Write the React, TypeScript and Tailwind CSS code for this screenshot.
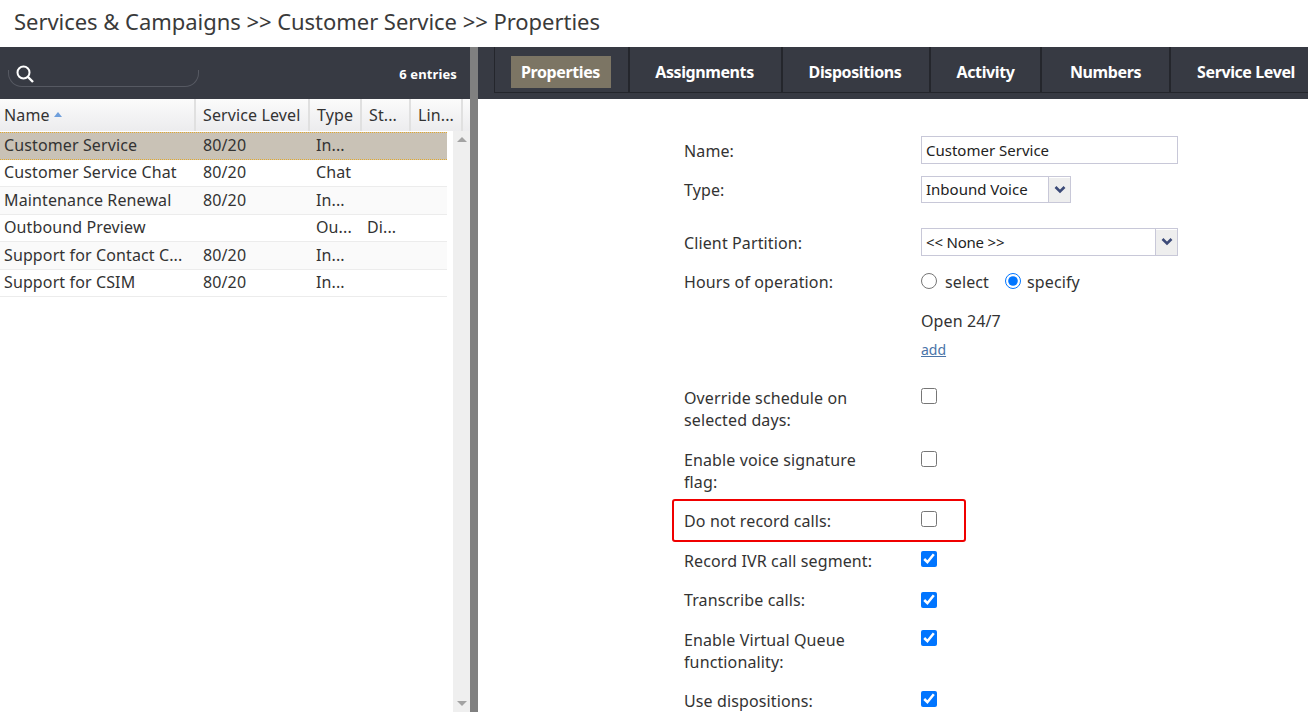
import { ReactNode } from "react";

const tabs = [
	{ label: "Properties", cls: "w-[135px] pr-[2px]" },
	{ label: "Assignments", cls: "w-[153px] pr-[2px]" },
	{ label: "Dispositions", cls: "w-[148px] pr-[2px]" },
	{ label: "Activity", cls: "w-[111px]" },
	{ label: "Numbers", cls: "w-[129px]" },
	{ label: "Service Level", cls: "w-[152px]" },
];

const cols = [
	{ label: "Name", cls: "w-[196px] pl-1" },
	{ label: "Service Level", cls: "w-[114px] pl-[7px]" },
	{ label: "Type", cls: "w-[52px] pl-[7px]" },
	{ label: "St...", cls: "w-[49px] pl-[7px]" },
	{ label: "Lin...", cls: "w-[52px] pl-[7px]" },
];

const cellWidths = ["w-[195px] pl-1", "w-[113px] pl-2", "w-[51px] pl-2", "w-[49px] pl-2", "w-[39px] pl-2"];

const rows = [
	["Customer Service", "80/20", "In...", "", ""],
	["Customer Service Chat", "80/20", "Chat", "", ""],
	["Maintenance Renewal", "80/20", "In...", "", ""],
	["Outbound Preview", "", "Ou...", "Di...", ""],
	["Support for Contact C...", "80/20", "In...", "", ""],
	["Support for CSIM", "80/20", "In...", "", ""],
];

function Row({ label, className, children }: { label?: ReactNode; className: string; children?: ReactNode }) {
	return (
		<div className={`flex ${className}`}>
			<div className="w-[237px] pr-[45px] leading-[22px]">{label}</div>
			<div className="flex-1">{children}</div>
		</div>
	);
}

function Check({ checked }: { checked?: boolean }) {
	return <input type="checkbox" defaultChecked={checked} className="block w-4 h-4 m-0" />;
}

function Arrow() {
	return (
		<span className="w-[22px] h-full shrink-0 flex items-center justify-center bg-[#eeeeee] border-l border-[#c8c8d8] shadow-[inset_0_1px_0_#fff]">
			<svg width="12" height="8" viewBox="0 0 12 8">
				<path d="M1.5 1 L6 5.5 L10.5 1" fill="none" stroke="#3c4a78" strokeWidth="2.6" />
			</svg>
		</span>
	);
}

export default function App() {
	return (
		<div className="h-[712px] w-[1308px] overflow-hidden bg-white text-[#333] text-[16px] tracking-[0.12px] font-['Noto_Sans',sans-serif]">
			<h1 className="h-[47px] pl-[14px] pt-[5px] text-[22px] leading-[33px] tracking-[-0.04px] text-[#3a3a3a]">
				Services &amp; Campaigns &gt;&gt; Customer Service &gt;&gt; Properties
			</h1>
			<div className="flex h-[665px]">
				<section className="w-[470px] flex flex-col">
					<div className="h-[52px] bg-[#373a43] flex items-start justify-between pl-2 pr-[13px]">
						<div className="w-[191px] h-[17px] mt-[23px] border-b border-l border-r border-[#565962] rounded-b-[14px] pl-[6px]">
							<svg width="20" height="20" viewBox="0 0 20 20" className="-mt-[6px]">
								<circle cx="8.5" cy="8.5" r="6" fill="none" stroke="#fff" strokeWidth="2" />
								<path d="M13 13 L18 18" stroke="#fff" strokeWidth="2.4" />
							</svg>
						</div>
						<span className="mt-[17px] text-[13px] leading-[20px] font-bold text-white">6 entries</span>
					</div>
					<div className="h-[32px] flex bg-gradient-to-b from-[#fbfbfb] to-[#ececee]">
						{cols.map((c, i) => (
							<div key={c.label} className={`${c.cls} shrink-0 leading-[32px] border-r-2 border-[#e0e0e0] flex items-center gap-1`}>
								{c.label}
								{i === 0 && <span className="w-0 h-0 mb-px border-x-[4.5px] border-x-transparent border-b-[5px] border-b-[#6f9fdc]" />}
							</div>
						))}
					</div>
					<div className="flex flex-1">
						<div className="w-[447px] pt-px">
							{rows.map((r, i) => (
								<div
									key={r[0]}
									className={`flex h-[27.5px] items-center pb-px leading-[22px] ${
										i === 0
											? "bg-[#c9c2b6] border-y border-dotted border-[#e2a92c]"
											: i % 2 === 1
												? "bg-white border-b border-[#ececec]"
												: "bg-[#fafafa] border-b border-[#ececec]"
									}`}
								>
									{r.map((v, j) => (
										<div key={j} className={`${cellWidths[j]} shrink-0 whitespace-nowrap`}>
											{v}
										</div>
									))}
								</div>
							))}
						</div>
						<div className="w-[6px]" />
						<div className="w-[17px] bg-[#efefef] flex flex-col items-center justify-between py-[6px]">
							<span className="w-0 h-0 border-x-[5px] border-x-transparent border-b-[5px] border-b-[#a3a3a3]" />
							<span className="w-0 h-0 border-x-[5px] border-x-transparent border-t-[5px] border-t-[#a3a3a3]" />
						</div>
					</div>
				</section>
				<div className="w-2 bg-[#808080]" />
				<section className="flex-1 min-w-0">
					<div className="h-[52px] bg-[#373a43] pl-4">
						<div className="flex h-[46px] border-b border-l border-[#24262c]">
							{tabs.map((t, i) => (
								<div key={t.label} className={`${t.cls} shrink-0 flex items-center justify-center border-r-2 border-[#24262c] pt-[4px]`}>
									<span
										className={`h-8 flex items-center justify-center font-bold text-[16px] tracking-[-0.4px] text-white ${
											i === 0 ? "bg-[#7c7564] w-[100px]" : "px-[10px]"
										}`}
									>
										{t.label}
									</span>
								</div>
							))}
						</div>
					</div>
					<div className="pl-[206px] pt-[37px]">
						<Row label={<span className="block mt-[4px]">Name:</span>} className="h-[28px]">
							<div className="w-[257px] h-[28px] border border-[#c8c8d8] pl-1 text-[15px] tracking-normal leading-[26px] text-[#222]">Customer Service</div>
						</Row>
						<Row label={<span className="block mt-[3px]">Type:</span>} className="h-[27px] mt-[12px]">
							<div className="w-[150px] h-[27px] border border-[#c8c8d8] pl-1 text-[15px] tracking-normal leading-[25px] text-[#222] flex justify-between">
								Inbound Voice
								<Arrow />
							</div>
						</Row>
						<Row label={<span className="block mt-[4px]">Client Partition:</span>} className="h-[28px] mt-[25px]">
							<div className="w-[257px] h-[28px] border border-[#c8c8d8] pl-1 text-[15px] tracking-[-0.2px] leading-[26px] text-[#222] flex justify-between">
								&lt;&lt; None &gt;&gt;
								<Arrow />
							</div>
						</Row>
						<Row label="Hours of operation:" className="h-[22px] mt-[15px]">
							<div className="flex items-center h-[22px]">
								<input type="radio" name="hours" className="w-4 h-4 m-0 -mt-[2px]" />
								<span className="ml-2 mr-[16px]">select</span>
								<input type="radio" name="hours" defaultChecked className="w-4 h-4 m-0 -mt-[2px]" />
								<span className="ml-[6px]">specify</span>
							</div>
						</Row>
						<Row className="h-[22px] mt-[16px]">Open 24/7</Row>
						<Row className="h-[22px] mt-[6px]">
							<a className="text-[14px] tracking-normal text-[#4a74a8] underline leading-[22px]">add</a>
						</Row>
						<Row label="Override schedule on selected days:" className="h-[44px] mt-[28px]">
							<div className="mt-px"><Check /></div>
						</Row>
						<Row label="Enable voice signature flag:" className="h-[44px] mt-[18px]">
							<div className="mt-[2px]"><Check /></div>
						</Row>
						<div className="relative mt-[17px]">
							<Row label="Do not record calls:" className="h-[22px]">
								<div className="mt-px"><Check /></div>
							</Row>
							<div className="absolute left-[-12px] top-[-11px] w-[294px] h-[43px] border-2 border-[#f00000] rounded-[3px]" />
						</div>
						<Row label="Record IVR call segment:" className="h-[22px] mt-[18px]">
							<div className="mt-px"><Check checked /></div>
						</Row>
						<Row label="Transcribe calls:" className="h-[22px] mt-[17px]">
							<div className="mt-[3px]"><Check checked /></div>
						</Row>
						<Row label="Enable Virtual Queue functionality:" className="h-[44px] mt-[18px]">
							<div className="mt-px"><Check checked /></div>
						</Row>
						<Row label="Use dispositions:" className="h-[22px] mt-[17px]">
							<div className="mt-px"><Check checked /></div>
						</Row>
					</div>
				</section>
			</div>
		</div>
	);
}
